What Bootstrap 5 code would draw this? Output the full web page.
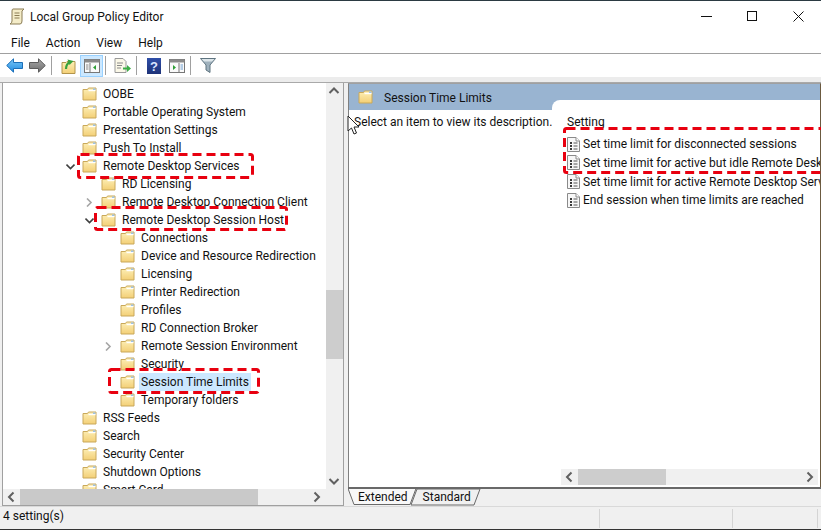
<!doctype html>
<html lang="en"><head><meta charset="utf-8"><title>Local Group Policy Editor</title>
<link href="https://cdn.jsdelivr.net/npm/bootstrap@5.3.0/dist/css/bootstrap.min.css" rel="stylesheet">
<style>
html,body{margin:0;height:530px;overflow:hidden;background:#fff}
body{font-family:Roboto,"Noto Sans",sans-serif;font-size:12px;color:#111;line-height:18px}
.win{width:821px;height:530px;position:relative;border-top:1px solid #2b3a42;border-bottom:1px solid #333;overflow:hidden;background:#f0f0f0}
.titlebar{height:31px;background:#fff;padding-left:9px}
.titlebar .ttl{margin-left:5px}
.winbtns{margin-left:auto}
.winbtn{width:46px;height:31px}
.menubar{height:21px;background:#fff;border-bottom:1px solid #a0a0a0;padding-left:11px;gap:16px;box-sizing:content-box}
.toolbar{height:23px;background:#fff;padding-left:3px}
.tsep{width:1px;height:19px;background:#a0a0a0;margin:0 5px 0 2px}
.tbtn{width:23px;height:22px;display:flex;align-items:center;justify-content:center;flex:none}
.tbtn.on{background:#cce8ff;border:1px solid #99d1ff}
.band{height:5px;background:#ececec;border-bottom:1px solid #a9a9a9;box-sizing:content-box}
.mainarea{height:423px;background:#f0f0f0}
.leftpane{width:342px;margin-left:2px;border-left:1px solid #a0a0a0;border-right:1px solid #a0a0a0;border-bottom:1px solid #a0a0a0;background:#fff;height:423px;flex:none}
.treewrap{height:406px;overflow:hidden}
.treeclip{flex:1 1 auto;overflow:hidden;padding-top:2px;background:#fff}
.trow{height:18px;white-space:nowrap;position:relative}
.lv0{padding-left:79px}.lv1{padding-left:98px}.lv2{padding-left:117px}
.fold{width:15px;height:14px;margin-right:6px;flex:none}
.chev{position:absolute;top:5px;width:9px;height:9px}
.lv0 .chev{left:63px}.lv1 .chev{left:82px}.lv2 .chev{left:101px}
.seltext{background:#cce8ff;margin-left:-2px;padding:0 2px;height:18px}
.vbar{width:17px;background:#f0f0f0}
.vthumb{background:#cdcdcd;height:69px;margin-top:191px;flex:none}
.hbar{height:16px;background:#f0f0f0}
.hbar svg{flex:none}
.hthumb{width:238px;background:#c9c9c9;height:100%}
.hend{margin-right:18px}
.spl{width:4px;flex:none}
.rightcol{width:473px;flex:none}
.rightpane{background:#fff;border-left:1px solid #808080;height:404px;border-top:1px solid #a0a0a0;border-right:1px solid #6b5a40}
.bluehead{height:26px;background:#99b4d1;padding-left:9px;padding-top:5px;flex:none}
.bluehead .fold{margin-right:11px;margin-top:1px}
.rbody{flex:1 1 auto;min-height:0}
.descr{width:203px;background:#fff;flex:none;padding-left:5px;white-space:nowrap}
.dtext{padding-top:3px}
.setpane{flex:1 1 auto;background:#fff;border-top-left-radius:8px;margin-top:-10px;position:relative;padding:0 2px 2px 15px;overflow:hidden;min-width:0}
.setlist{min-height:0}
.sethead{padding-top:13px;height:35px}
.setrow{height:18.67px;white-space:nowrap}
.setico{width:13px;height:15px;margin-right:3px;flex:none}
.rhbar{height:16px;background:#f0f0f0;margin-left:-6px;flex:none}
.rthumb{width:88px;background:#cdcdcd;height:100%}
.tabstrip{height:19px;background:#f0f0f0;position:relative}
.tabart{position:absolute;left:0;top:0}
.tablbl{position:relative;padding-left:10px;padding-top:1px;gap:15px}
.statusbar{height:22px;border-top:1px solid #d9d9d9;background:#f0f0f0;padding-left:3px}
.sbcell{border-left:1px solid #d4d4d4;height:19px;margin-top:2px;flex:none}
.sb1{width:133px}.sb2{width:85px}.sb3{width:4px}
.redlayer{position:absolute;left:0;top:-1px;pointer-events:none}
.cursorarrow{position:absolute;left:347px;top:114px;width:14px;height:21px}
</style></head><body>
<svg width="0" height="0" class="position-absolute">
<defs>
<linearGradient id="fg" x1="0" y1="0" x2="0" y2="1"><stop offset="0" stop-color="#fdf0b8"/><stop offset="1" stop-color="#f3cf76"/></linearGradient>
<linearGradient id="bluear" x1="0" y1="0" x2="0" y2="1"><stop offset="0" stop-color="#7cc8f8"/><stop offset="1" stop-color="#1f8be0"/></linearGradient>
<linearGradient id="greyar" x1="0" y1="0" x2="0" y2="1"><stop offset="0" stop-color="#a8a8a8"/><stop offset="1" stop-color="#6e6e6e"/></linearGradient>
<linearGradient id="helpg" x1="0" y1="0" x2="0" y2="1"><stop offset="0" stop-color="#2f4fa8"/><stop offset="1" stop-color="#1d3278"/></linearGradient>
<symbol id="folder" viewBox="0 0 15 14"><path d="M1 2.500h4.500l1-1.500h7.500v12H1z" fill="url(#fg)" stroke="#c9a85a"/><path d="M6.500 3.500h7" stroke="#fff" stroke-width="1.400"/><path d="M11 1.500h2.500v1.500H11z" fill="#9dc3e8"/></symbol>
<symbol id="setdoc" viewBox="0 0 13 15"><path d="M.5.500h8.500l3.500 3.500v10.500H.5z" fill="#f7f7f7" stroke="#8a8a8a"/><path d="M9 .5v3.500h3.500" fill="#fff" stroke="#8a8a8a"/><path d="M3 5h2v2H3zM3 8h2v2H3zM3 11h2v2H3z" fill="#3a3a3a"/><path d="M6.500 6h4M6.500 9h4M6.500 12h4" stroke="#555"/></symbol>
<symbol id="chevr" viewBox="0 0 9 9"><path d="M2 .5l4 4-4 4" fill="none" stroke="#a6a6a6" stroke-width="1.600"/></symbol>
<symbol id="chevd" viewBox="0 0 9 9"><path d="M.5 2.500l4 4 4-4" fill="none" stroke="#404040" stroke-width="1.600"/></symbol>
<symbol id="sl" viewBox="0 0 16 16"><path d="M10 3.500L5.500 8l4.500 4.500" fill="none" stroke="#606060" stroke-width="2"/></symbol>
<symbol id="sr" viewBox="0 0 16 16"><path d="M6 3.500L10.500 8 6 12.500" fill="none" stroke="#606060" stroke-width="2"/></symbol>
<symbol id="su" viewBox="0 0 16 16"><path d="M3.500 10L8 5.500l4.500 4.500" fill="none" stroke="#606060" stroke-width="2"/></symbol>
<symbol id="sd" viewBox="0 0 16 16"><path d="M3.500 6L8 10.500 12.500 6" fill="none" stroke="#606060" stroke-width="2"/></symbol>
</defs></svg>
<div class="win d-flex flex-column">
 <div class="titlebar d-flex align-items-center">
  <svg width="16" height="17" viewBox="0 0 16 17"><path d="M4 1h11l-2 2v10q0 3-2 3H1q2-1 2-3V3q0-2 1-2z" fill="#f4ecc8" stroke="#8b7d55"/><path d="M5.500 5h5M5.500 7.500h5M5.500 10h5" stroke="#8b7d55"/></svg>
  <span class="ttl">Local Group Policy Editor</span>
  <div class="winbtns d-flex">
   <div class="winbtn d-flex align-items-center justify-content-center"><svg width="11" height="11"><path d="M0 5.500h11" stroke="#111"/></svg></div>
   <div class="winbtn d-flex align-items-center justify-content-center"><svg width="11" height="11"><rect x=".5" y=".5" width="9" height="9" fill="none" stroke="#111"/></svg></div>
   <div class="winbtn d-flex align-items-center justify-content-center"><svg width="11" height="11"><path d="M.5.500l10 10M10.500.500l-10 10" stroke="#111"/></svg></div>
  </div>
 </div>
 <div class="menubar d-flex align-items-center"><span>File</span><span>Action</span><span>View</span><span>Help</span></div>
 <div class="toolbar d-flex align-items-center">
  <div class="tbtn"><svg width="17" height="15" viewBox="0 0 17 15"><path d="M.7 7.500L7.500.8v3.700h9v6h-9v3.700z" fill="url(#bluear)" stroke="#1c6fb8"/></svg></div>
  <div class="tbtn"><svg width="17" height="15" viewBox="0 0 17 15"><path d="M16.300 7.500L9.500.8v3.700h-9v6h9v3.700z" fill="url(#greyar)" stroke="#5c5c5c"/></svg></div>
  <div class="tsep"></div>
  <div class="tbtn"><svg width="15" height="16" viewBox="0 0 15 16"><path d="M1 4.500h4l1-1h8v12H1z" fill="url(#fg)" stroke="#b3954c"/><path d="M5 11c0-4 2-6 4-7" fill="none" stroke="#37a23e" stroke-width="2.200"/><path d="M6.500 1.500l6 1.500-4 4z" fill="#37a23e"/></svg></div>
  <div class="tbtn on"><svg width="16" height="14" viewBox="0 0 16 14"><rect x=".5" y=".5" width="15" height="13" fill="#fafafa" stroke="#777"/><rect x=".5" y=".5" width="15" height="3" fill="#8b8b8b"/><path d="M6 4v9" stroke="#777"/><path d="M12 6v5L9 8.500z" fill="#2e9e35"/><path d="M2 6h2.500M2 8h2.500M2 10h2.500" stroke="#888"/></svg></div>
  <div class="tsep"></div>
  <div class="tbtn"><svg width="17" height="15" viewBox="0 0 17 15"><path d="M1 .5h8l3 3v11H1z" fill="#fbf8e8" stroke="#999"/><path d="M3 5h6M3 7.500h5M3 10h4" stroke="#888"/><path d="M9 9.500h4V7l4 3.500-4 3.500v-2.500H9z" fill="#3dae45"/></svg></div>
  <div class="tsep"></div>
  <div class="tbtn"><svg width="14" height="16" viewBox="0 0 14 16"><rect width="14" height="16" fill="url(#helpg)"/><text x="7" y="13" font-size="13" font-weight="700" fill="#dbe6ff" text-anchor="middle" font-family="Liberation Sans">?</text></svg></div>
  <div class="tbtn"><svg width="16" height="14" viewBox="0 0 16 14"><rect x=".5" y=".5" width="15" height="13" fill="#fafafa" stroke="#777"/><rect x=".5" y=".5" width="15" height="3" fill="#8b8b8b"/><path d="M10 4v9" stroke="#777"/><path d="M4 6v5l3-2.500z" fill="#2e9e35"/><path d="M11.500 6H14M11.500 8H14M11.500 10H14" stroke="#6f9fd0"/></svg></div>
  <div class="tsep"></div>
  <div class="tbtn"><svg width="16" height="15" viewBox="0 0 16 15"><path d="M.5.500h15L10 7v7.500L6 12V7z" fill="#9fb1bd" stroke="#5f7480"/><path d="M1.500 1h13L12 3.500H4z" fill="#dde6ea"/></svg></div>
 </div>
 <div class="band"></div>
 <div class="mainarea d-flex">
  <div class="leftpane d-flex flex-column">
   <div class="treewrap d-flex">
    <div class="treeclip">
     <div class="trow lv0 d-flex align-items-center"><svg class="fold"><use href="#folder"/></svg>OOBE</div>
     <div class="trow lv0 d-flex align-items-center"><svg class="fold"><use href="#folder"/></svg>Portable Operating System</div>
     <div class="trow lv0 d-flex align-items-center"><svg class="fold"><use href="#folder"/></svg>Presentation Settings</div>
     <div class="trow lv0 d-flex align-items-center"><svg class="fold"><use href="#folder"/></svg>Push To Install</div>
     <div class="trow lv0 d-flex align-items-center"><svg class="chev"><use href="#chevd"/></svg><svg class="fold"><use href="#folder"/></svg>Remote Desktop Services</div>
     <div class="trow lv1 d-flex align-items-center"><svg class="fold"><use href="#folder"/></svg>RD Licensing</div>
     <div class="trow lv1 d-flex align-items-center"><svg class="chev"><use href="#chevr"/></svg><svg class="fold"><use href="#folder"/></svg>Remote Desktop Connection Client</div>
     <div class="trow lv1 d-flex align-items-center"><svg class="chev"><use href="#chevd"/></svg><svg class="fold"><use href="#folder"/></svg>Remote Desktop Session Host</div>
     <div class="trow lv2 d-flex align-items-center"><svg class="fold"><use href="#folder"/></svg>Connections</div>
     <div class="trow lv2 d-flex align-items-center"><svg class="fold"><use href="#folder"/></svg>Device and Resource Redirection</div>
     <div class="trow lv2 d-flex align-items-center"><svg class="fold"><use href="#folder"/></svg>Licensing</div>
     <div class="trow lv2 d-flex align-items-center"><svg class="fold"><use href="#folder"/></svg>Printer Redirection</div>
     <div class="trow lv2 d-flex align-items-center"><svg class="fold"><use href="#folder"/></svg>Profiles</div>
     <div class="trow lv2 d-flex align-items-center"><svg class="fold"><use href="#folder"/></svg>RD Connection Broker</div>
     <div class="trow lv2 d-flex align-items-center"><svg class="chev"><use href="#chevr"/></svg><svg class="fold"><use href="#folder"/></svg>Remote Session Environment</div>
     <div class="trow lv2 d-flex align-items-center"><svg class="fold"><use href="#folder"/></svg>Security</div>
     <div class="trow lv2 d-flex align-items-center"><svg class="fold"><use href="#folder"/></svg><span class="seltext">Session Time Limits</span></div>
     <div class="trow lv2 d-flex align-items-center"><svg class="fold"><use href="#folder"/></svg>Temporary folders</div>
     <div class="trow lv0 d-flex align-items-center"><svg class="fold"><use href="#folder"/></svg>RSS Feeds</div>
     <div class="trow lv0 d-flex align-items-center"><svg class="fold"><use href="#folder"/></svg>Search</div>
     <div class="trow lv0 d-flex align-items-center"><svg class="fold"><use href="#folder"/></svg>Security Center</div>
     <div class="trow lv0 d-flex align-items-center"><svg class="fold"><use href="#folder"/></svg>Shutdown Options</div>
     <div class="trow lv0 d-flex align-items-center"><svg class="fold"><use href="#folder"/></svg>Smart Card</div>
    </div>
    <div class="vbar d-flex flex-column">
     <svg width="16" height="16"><use href="#su"/></svg>
     <div class="vthumb"></div>
     <div class="flex-grow-1"></div>
     <svg width="16" height="16"><use href="#sd"/></svg>
    </div>
   </div>
   <div class="hbar d-flex">
    <svg width="17" height="16"><use href="#sl"/></svg>
    <div class="hthumb"></div>
    <div class="flex-grow-1"></div>
    <svg width="17" height="16" class="hend"><use href="#sr"/></svg>
   </div>
  </div>
  <div class="spl"></div>
  <div class="rightcol d-flex flex-column">
   <div class="rightpane d-flex flex-column">
    <div class="bluehead d-flex"><svg class="fold"><use href="#folder"/></svg><span>Session Time Limits</span></div>
    <div class="rbody d-flex">
     <div class="descr"><div class="dtext">Select an item to view its description.</div></div>
     <div class="setpane d-flex flex-column">
      <div class="setlist flex-grow-1">
       <div class="sethead">Setting</div>
       <div class="setrow d-flex align-items-center"><svg class="setico"><use href="#setdoc"/></svg>Set time limit for disconnected sessions</div>
       <div class="setrow d-flex align-items-center"><svg class="setico"><use href="#setdoc"/></svg>Set time limit for active but idle Remote Desktop Services sessions</div>
       <div class="setrow d-flex align-items-center"><svg class="setico"><use href="#setdoc"/></svg>Set time limit for active Remote Desktop Services sessions</div>
       <div class="setrow d-flex align-items-center"><svg class="setico"><use href="#setdoc"/></svg>End session when time limits are reached</div>
      </div>
      <div class="rhbar d-flex">
       <svg width="17" height="16"><use href="#sl"/></svg>
       <div class="rthumb"></div>
       <div class="flex-grow-1"></div>
       <svg width="17" height="16"><use href="#sr"/></svg>
      </div>
     </div>
    </div>
   </div>
   <div class="tabstrip">
    <svg class="tabart" width="473" height="19" viewBox="0 0 473 19"><path d="M0 1h473" stroke="#696969" stroke-width="2"/><path d="M63 18l6-16h63l-6 16z" fill="#f0f0f0" stroke="#696969"/><path d="M0 1.500l6 16h56l6-16z" fill="#f8f8f8" stroke="#696969"/></svg>
    <div class="tablbl d-flex"><span>Extended</span><span>Standard</span></div>
   </div>
  </div>
 </div>
 <div class="statusbar d-flex">
  <span class="flex-grow-1">4 setting(s)</span>
  <div class="sbcell sb1"></div>
  <div class="sbcell sb2"></div>
  <div class="sbcell sb3"></div>
 </div>
 <svg class="cursorarrow" viewBox="0 0 14 21"><path d="M1 1v15l3.500-3 2.500 6 2.500-1-2.500-6H12z" fill="#fff" stroke="#222"/></svg>
 <svg class="redlayer" width="821" height="530"><g fill="none" stroke="#e8000f" stroke-width="3" stroke-dasharray="9 5"><rect x="78.500" y="154.500" width="174" height="23" rx="2"/><rect x="95.500" y="207.500" width="191" height="22" rx="2"/><rect x="109.500" y="369.500" width="149" height="23" rx="2"/><rect x="564.500" y="128.500" width="290" height="44" rx="2"/></g></svg>
</div>
</body></html>
